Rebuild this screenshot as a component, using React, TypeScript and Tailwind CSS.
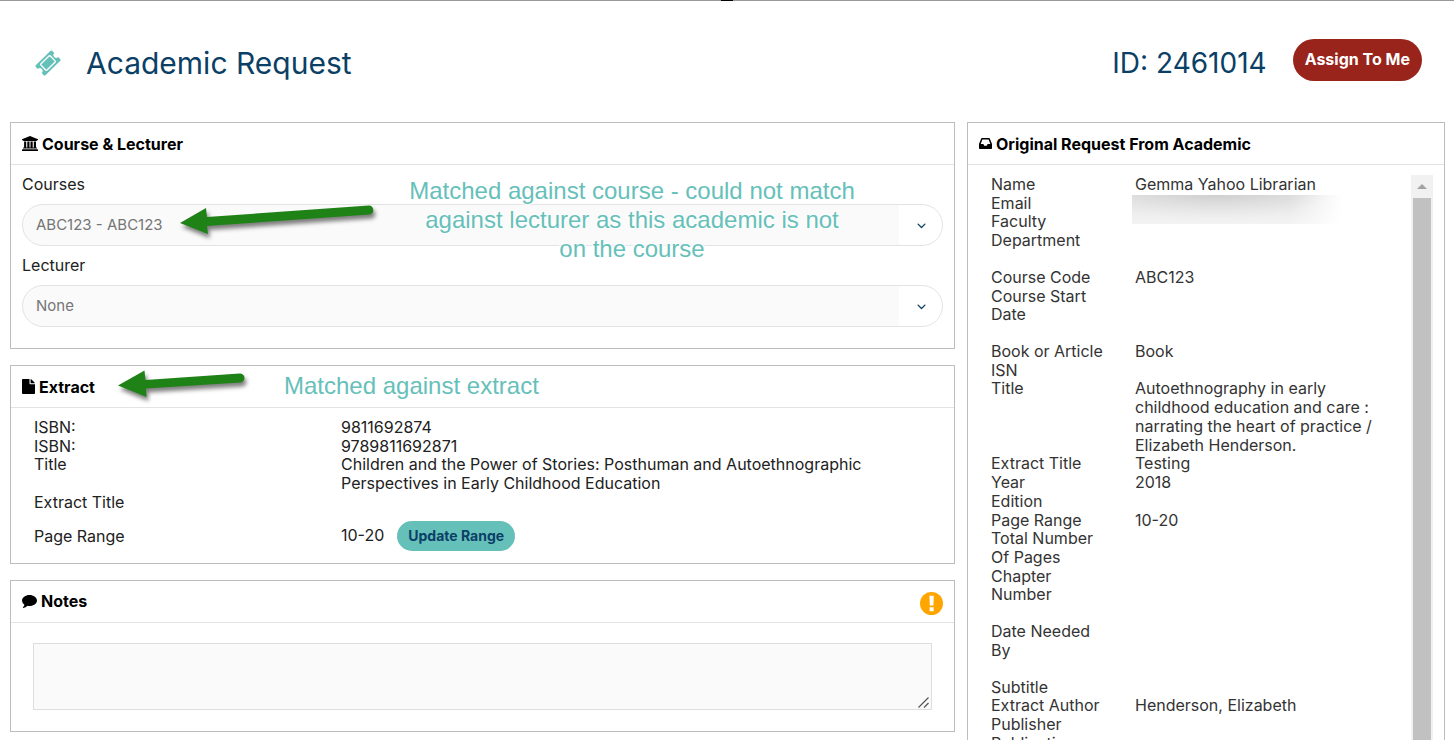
import React from "react";
import { FaAngleDown } from "react-icons/fa6";

type Field = [label: string, value?: string];

const requestGroups: Field[][] = [
  [["Name", "Gemma Yahoo Librarian"], ["Email", "hidden"], ["Faculty"], ["Department"]],
  [["Course Code", "ABC123"], ["Course Start Date"]],
  [
    ["Book or Article", "Book"],
    ["ISN"],
    ["Title", "Autoethnography in early childhood education and care : narrating the heart of practice / Elizabeth Henderson."],
    ["Extract Title", "Testing"],
    ["Year", "2018"],
    ["Edition"],
    ["Page Range", "10-20"],
    ["Total Number Of Pages"],
    ["Chapter Number"],
  ],
  [["Date Needed By"]],
  [["Subtitle"], ["Extract Author", "Henderson, Elizabeth"], ["Publisher"], ["Publication Date"]],
];

function TicketIcon() {
  return (
    <svg width="26" height="26" viewBox="0 0 26 26" aria-hidden="true">
      <g transform="rotate(-44 13 13)">
        <path d="M3 6h20q1.500 0 1.500 1.500v2.700a2.800 2.800 0 0 0 0 5.600v2.700q0 1.500-1.500 1.500H3q-1.500 0-1.500-1.500v-2.700a2.800 2.800 0 0 0 0-5.600V7.500Q1.500 6 3 6z" fill="#66c0ba" />
        <rect x="6.500" y="8.700" width="13" height="8.600" rx=".6" fill="none" stroke="#ffffff" strokeWidth="1.300" />
      </g>
    </svg>
  );
}

function UniversityIcon() {
  return (
    <svg width="16" height="15" viewBox="0 0 16 15" aria-hidden="true">
      <path d="M8 0l8 3.200v1.100h-1q0 .6-.6.600H1.600Q1 4.900 1 4.300H0V3.200zM2.100 5.400h2.100v6.100h1.100V5.400h2.200v6.100h1V5.400h2.200v6.100h1.100V5.400h2.200v6.100h.5q.5 0 .5.500v.600H1v-.600q0-.5.500-.5h.600zM.6 13.200h14.800q.6 0 .6.600V15H0v-1.200q0-.6.600-.6z" />
    </svg>
  );
}

function FileIcon() {
  return (
    <svg width="13" height="15" viewBox="0 0 13 15" aria-hidden="true">
      <path d="M7.500 4.500V0H.800A.8.8 0 0 0 0 .800v13.400a.8.8 0 0 0 .8.800h11.400a.8.8 0 0 0 .8-.800V5.300H8.300a.8.8 0 0 1-.8-.800zM8.600 4.200h4.200a2 2 0 0 0-.5-.900L9.500.500A2 2 0 0 0 8.600 0z" />
    </svg>
  );
}

function CommentIcon() {
  return (
    <svg width="15" height="13" viewBox="0 0 15 13" aria-hidden="true">
      <path d="M15 5.500c0 3-3.400 5.500-7.500 5.500q-1 0-1.900-.200Q3.700 12.500 1.300 13q-.4 0-.4-.4 0-.2.300-.5 1-1 1.200-2.400Q0 8 0 5.500C0 2.500 3.400 0 7.500 0S15 2.500 15 5.500z" />
    </svg>
  );
}

function InboxIcon() {
  return (
    <svg width="13" height="11" viewBox="0 0 13 11" fillRule="evenodd" aria-hidden="true">
      <path d="M3 0h7q.6 0 .8.500L13 6v4.200q0 .8-.8.800H.8Q0 11 0 10.200V6L2.200.500Q2.400 0 3 0zM3.400 1.500 1.700 6h2.700l.8 1.700h2.600L8.600 6h2.700L9.600 1.500z" />
    </svg>
  );
}

function AlertIcon() {
  return (
    <svg className="mt-1" width="23" height="23" viewBox="0 0 22 22" role="img" aria-label="Attention">
      <circle cx="11" cy="11" r="11" fill="#ffa500" />
      <path d="M9 3.500h4.200L12.800 13H9.400zM9.200 14.700h3.800v3.600H9.200z" fill="#ffffff" />
    </svg>
  );
}

function Panel({ icon, title, aside, children }: { icon: React.ReactNode; title: string; aside?: React.ReactNode; children: React.ReactNode }) {
  return (
    <section className="relative border border-[#bdbdbd] bg-white">
      <header className="flex h-[42px] items-center justify-between border-b border-[#e3e3e3] px-[11px]">
        <h2 className="flex items-center gap-1 leading-5 font-bold text-black">
          {icon}
          {title}
        </h2>
        {aside}
      </header>
      {children}
    </section>
  );
}

function SelectField({ id, label, value }: { id: string; label: string; value: string }) {
  return (
    <div>
      <label htmlFor={id} className="block h-[39px] pt-[7px] leading-6">
        {label}
      </label>
      <div className="relative">
        <select id={id} defaultValue={value} className="block h-[42px] w-full appearance-none rounded-full border border-[#e3e3e3] bg-[linear-gradient(to_left,#ffffff_43px,#fafafa_43px)] pl-[13px] text-[15px] text-[#757575]">
          <option>{value}</option>
        </select>
        <FaAngleDown className="pointer-events-none absolute top-4 right-4 size-[11px] text-[#124265]" />
      </div>
    </div>
  );
}

function Arrow({ className, width, d }: { className: string; width: number; d: string }) {
  return (
    <svg className={`pointer-events-none absolute overflow-visible drop-shadow-[2px_4px_2px_rgba(0,0,0,0.5)] ${className}`} width={width} height="32" viewBox={`0 0 ${width} 32`} fill="#1e8217" aria-hidden="true">
      <path d={d} />
    </svg>
  );
}

const noteText = "pointer-events-none absolute z-10 font-['Liberation_Sans',sans-serif] text-2xl leading-[29px] text-[#66c0ba] [text-shadow:0_0_2px_#fff,0_0_3px_#fff,0_0_3px_#fff,0_0_4px_#fff,0_0_4px_#fff,0_0_4px_#fff]";

export default function App() {
  return (
    <div className="h-screen overflow-hidden bg-white font-['Inter',sans-serif] text-base text-[#212121]">
      <div className="flex h-px justify-center bg-[#999999]">
        <div className="w-3 bg-black" />
      </div>
      <header className="flex h-[121px] items-start justify-between pt-[38px] pr-8 pl-[35px]">
        <div className="flex h-12 items-center gap-[25px]">
          <TicketIcon />
          <h1 className="text-[30px] text-[#0b4066]">Academic Request</h1>
        </div>
        <div className="flex items-start gap-[26px]">
          <p className="text-[28px] leading-[48px] text-[#0b4066]">ID: 2461014</p>
          <button type="button" className="h-[42px] rounded-full bg-[#98241b] px-3 pb-0.5 font-bold text-white">
            Assign To Me
          </button>
        </div>
      </header>
      <main className="grid grid-cols-[945fr_478fr] items-start gap-3 pr-[9px] pl-[10px]">
        <div className="flex flex-col gap-4">
          <Panel icon={<UniversityIcon />} title="Course & Lecturer">
            <div className="px-[11px] pb-[21px]">
              <SelectField id="courses" label="Courses" value="ABC123 - ABC123" />
              <SelectField id="lecturer" label="Lecturer" value="None" />
            </div>
            <Arrow className="top-[82px] left-[169px]" width={194} d="M0 18 26 3l1 9L189 .5a4.600 4.600 0 0 1 1 9L27 21l1 8z" />
            <p className={`${noteText} top-[53px] left-[380px] w-[482px] text-center`}>
              Matched against course - could not match
              <br />
              against lecturer as this academic is not
              <br />
              on the course
            </p>
          </Panel>
          <Panel icon={<FileIcon />} title="Extract">
            <dl className="grid grid-cols-[307px_1fr] px-[23px] pt-[10px] pb-3 leading-[1.17]">
              <dt>ISBN:</dt>
              <dd>9811692874</dd>
              <dt>ISBN:</dt>
              <dd>9789811692871</dd>
              <dt>Title</dt>
              <dd className="max-w-[540px]">Children and the Power of Stories: Posthuman and Autoethnographic Perspectives in Early Childhood Education</dd>
              <dt>Extract Title</dt>
              <dd />
              <dt className="pt-[15px]">Page Range</dt>
              <dd className="flex items-center gap-[13px] pt-[9px]">
                10-20
                <button type="button" className="h-[30px] rounded-full bg-[#66c0ba] px-[11px] text-sm font-bold text-[#0b4066]">
                  Update Range
                </button>
              </dd>
            </dl>
            <Arrow className="top-1 left-[107px]" width={126} d="M0 15.500 26.500.500l1 9.500 94-6.500a4.500 4.500 0 0 1 1 9l-94.500 6 .5 8.500z" />
            <p className={`${noteText} top-[5px] left-[273px]`}>Matched against extract</p>
          </Panel>
          <Panel icon={<CommentIcon />} title="Notes" aside={<AlertIcon />}>
            <div className="relative px-[22px] pt-5 pb-[21px]">
              <textarea aria-label="Notes" className="block h-[67px] w-full border border-[#dedede] bg-[#fafafa] p-2" />
              <svg className="pointer-events-none absolute right-[23px] bottom-[22px]" width="13" height="13" viewBox="0 0 13 13" aria-hidden="true">
                <path d="M0 0h13v13H0z" fill="#fafafa" />
                <path d="M.5 11.500 10.500 1.500M6 11.500l4.500-4.500" stroke="#555555" strokeWidth="1.200" />
              </svg>
            </div>
          </Panel>
        </div>
        <Panel icon={<InboxIcon />} title="Original Request From Academic">
          <div className="flex h-[640px] pt-[10px] pr-[11px] pl-[23px]">
            <div className="flex flex-1 flex-col gap-[18px] overflow-hidden leading-[1.17] text-[#333333]">
              {requestGroups.map((group) => (
                <dl key={group[0][0]} className="grid grid-cols-[116px_1fr] gap-x-7">
                  {group.map(([label, value]) => (
                    <React.Fragment key={label}>
                      <dt>{label}</dt>
                      <dd className="relative max-w-[248px]">
                        {value === "hidden" ? (
                          <span className="absolute top-px -left-[3px] h-[29px] w-[210px] bg-[radial-gradient(ellipse_at_40%_0%,#cfcfcf,transparent_60%),linear-gradient(to_right,#e2e2e2_75%,#ffffff)] [mask-image:linear-gradient(#000,rgba(0,0,0,0.4))]" />
                        ) : (
                          value
                        )}
                      </dd>
                    </React.Fragment>
                  ))}
                </dl>
              ))}
            </div>
            <div className="w-[22px] bg-[#f1f1f1] px-0.5" aria-hidden="true">
              <div className="flex h-[23px] items-center justify-center">
                <svg width="10" height="5" viewBox="0 0 10 5" fill="#a3a3a3">
                  <path d="M0 5 5 0l5 5z" />
                </svg>
              </div>
              <div className="h-[600px] bg-[#c1c1c1]" />
            </div>
          </div>
        </Panel>
      </main>
    </div>
  );
}
